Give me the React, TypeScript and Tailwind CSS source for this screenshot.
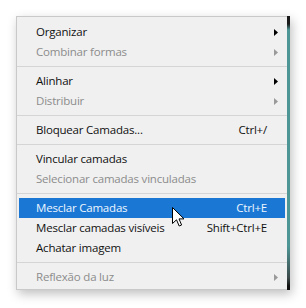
import React from 'react';

type Item =
  | { kind: 'sep' }
  | { kind: 'item'; label: string; shortcut?: string; sub?: boolean; disabled?: boolean; active?: boolean };

const items: Item[] = [
  { kind: 'item', label: 'Organizar', sub: true },
  { kind: 'item', label: 'Combinar formas', sub: true, disabled: true },
  { kind: 'sep' },
  { kind: 'item', label: 'Alinhar', sub: true },
  { kind: 'item', label: 'Distribuir', sub: true, disabled: true },
  { kind: 'sep' },
  { kind: 'item', label: 'Bloquear Camadas...', shortcut: 'Ctrl+/' },
  { kind: 'sep' },
  { kind: 'item', label: 'Vincular camadas' },
  { kind: 'item', label: 'Selecionar camadas vinculadas', disabled: true },
  { kind: 'sep' },
  { kind: 'item', label: 'Mesclar Camadas', shortcut: 'Ctrl+E', active: true },
  { kind: 'item', label: 'Mesclar camadas visíveis', shortcut: 'Shift+Ctrl+E' },
  { kind: 'item', label: 'Achatar imagem' },
  { kind: 'sep' },
  { kind: 'item', label: 'Reflexão da luz', sub: true, disabled: true },
];

const Arrow = ({ disabled }: { disabled?: boolean }) => (
  <svg width="4" height="7" viewBox="0 0 4 7" className="absolute right-[7px] top-[7px]">
    <path d="M0 0 L4 3.5 L0 7 Z" fill={disabled ? '#9a9a9a' : '#000'} />
  </svg>
);

const Cursor = () => (
  <svg width="13" height="21" viewBox="0 0 13 21" className="absolute left-[172px] top-[207px]">
    <path
      d="M0.5 0.5 L0.5 16.5 L4.5 12.8 L7.2 19 L9.6 18 L7 11.9 L12 11.9 Z"
      fill="#fff"
      stroke="#000"
      strokeWidth="1"
      strokeLinejoin="miter"
    />
  </svg>
);

export default function App() {
  return (
    <div className="relative w-[306px] h-[308px] bg-white pt-[16px] pl-[16px]" style={{ fontFamily: '"Open Sans", "Noto Sans", sans-serif' }}>
      <div className="flex w-[274px] h-[274px] shadow-[2px_4px_10px_rgba(0,0,0,0.25)]">
        <div className="flex-1 bg-[#f0f0f0] border-l border-t border-b border-[#c9c9c9] pt-[5px] px-[2px]">
          {items.map((it, i) =>
            it.kind === 'sep' ? (
              <div key={i} className="h-[9px] flex items-center -mx-[2px]">
                <div className="w-full h-px bg-[#d5d5d5]" />
              </div>
            ) : (
              <div
                key={i}
                className={`relative h-[20px] flex items-center pl-[17px] pr-[18px] text-[11.5px] tracking-[-0.2px] ${
                  it.active ? 'bg-[#1a78d4] text-[#eef6ff]' : it.disabled ? 'text-[#8c8c8c]' : 'text-[#111]'
                }`}
              >
                <span className="flex-1 whitespace-nowrap">{it.label}</span>
                {it.shortcut && <span className="whitespace-nowrap">{it.shortcut}</span>}
                {it.sub && <Arrow disabled={it.disabled} />}
              </div>
            )
          )}
        </div>
        <div className="w-[3px] h-full bg-[linear-gradient(to_bottom,#1a1a1a_0px,#1a1a1a_8px,#4e9696_14px,#4e9696_230px,#3d4a4a_262px,#111_270px)]" />
      </div>
      <Cursor />
    </div>
  );
}
